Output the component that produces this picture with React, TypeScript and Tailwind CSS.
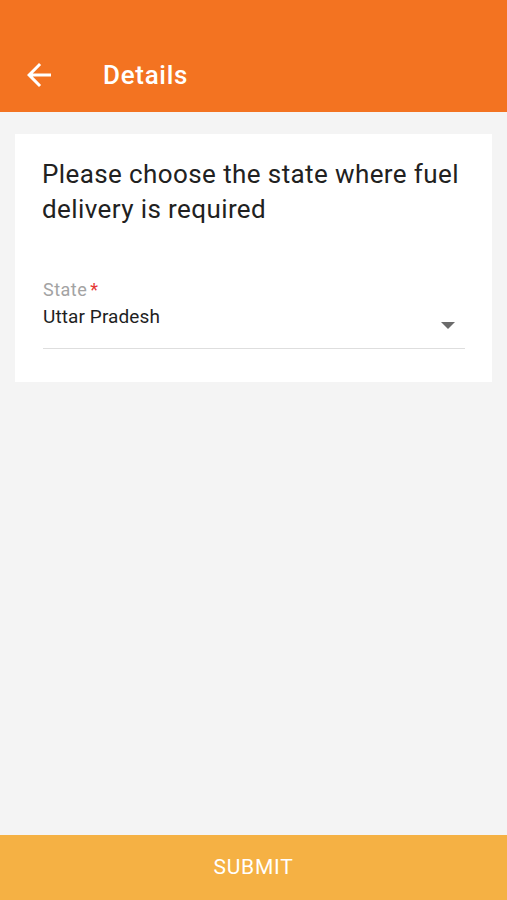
export default function App() {
    return (
        <div className="flex flex-col h-screen bg-[#f4f4f4]" style={{ fontFamily: 'Roboto, "Noto Sans", sans-serif' }}>
            {/* Top bar */}
            <header className="h-[112px] bg-[#f37321] flex items-center pt-[38px] shrink-0">
                <svg className="ml-[27px] w-[24px] h-[24px]" viewBox="4 4 16 16" fill="#ffffff">
                    <path d="M20 11H7.83l5.59-5.59L12 4l-8 8 8 8 1.41-1.41L7.83 13H20v-2z" />
                </svg>
                <h1 className="ml-[52px] text-[26px] tracking-[0.7px] font-medium text-white leading-none">Details</h1>
            </header>

            <main className="flex-1 px-[15px] pt-[22px]">
                <div className="bg-white pt-[23px] pb-[33px] pl-[27px] pr-[27px]">
                    <p className="text-[26px] leading-[35px] tracking-[0.4px] text-[#212121]">
                        Please choose the state where fuel delivery is required
                    </p>

                    <div className="mt-[53px] pl-[1px]">
                        <div className="text-[18px] leading-[20px] tracking-[0.5px] text-[#a3a3a3]">
                            State<span className="text-[#e53935] ml-[3px]">*</span>
                        </div>
                        <div className="mt-[6px] flex items-start justify-between border-b border-[#dedede] pb-[19px]">
                            <span className="text-[19px] leading-[22px] tracking-[0.1px] text-[#1f1f1f]">Uttar Pradesh</span>
                            <svg className="mt-[16px] mr-[10px] w-[14px] h-[7px]" viewBox="0 0 14 7" fill="#6b6b6b">
                                <path d="M0 0h14L7 7z" />
                            </svg>
                        </div>
                    </div>
                </div>
            </main>

            <button className="h-[65px] shrink-0 bg-[#f5b144] text-white text-[21px] tracking-[0.8px] flex items-center justify-center pt-[1px]">
                SUBMIT
            </button>
        </div>
    );
}
